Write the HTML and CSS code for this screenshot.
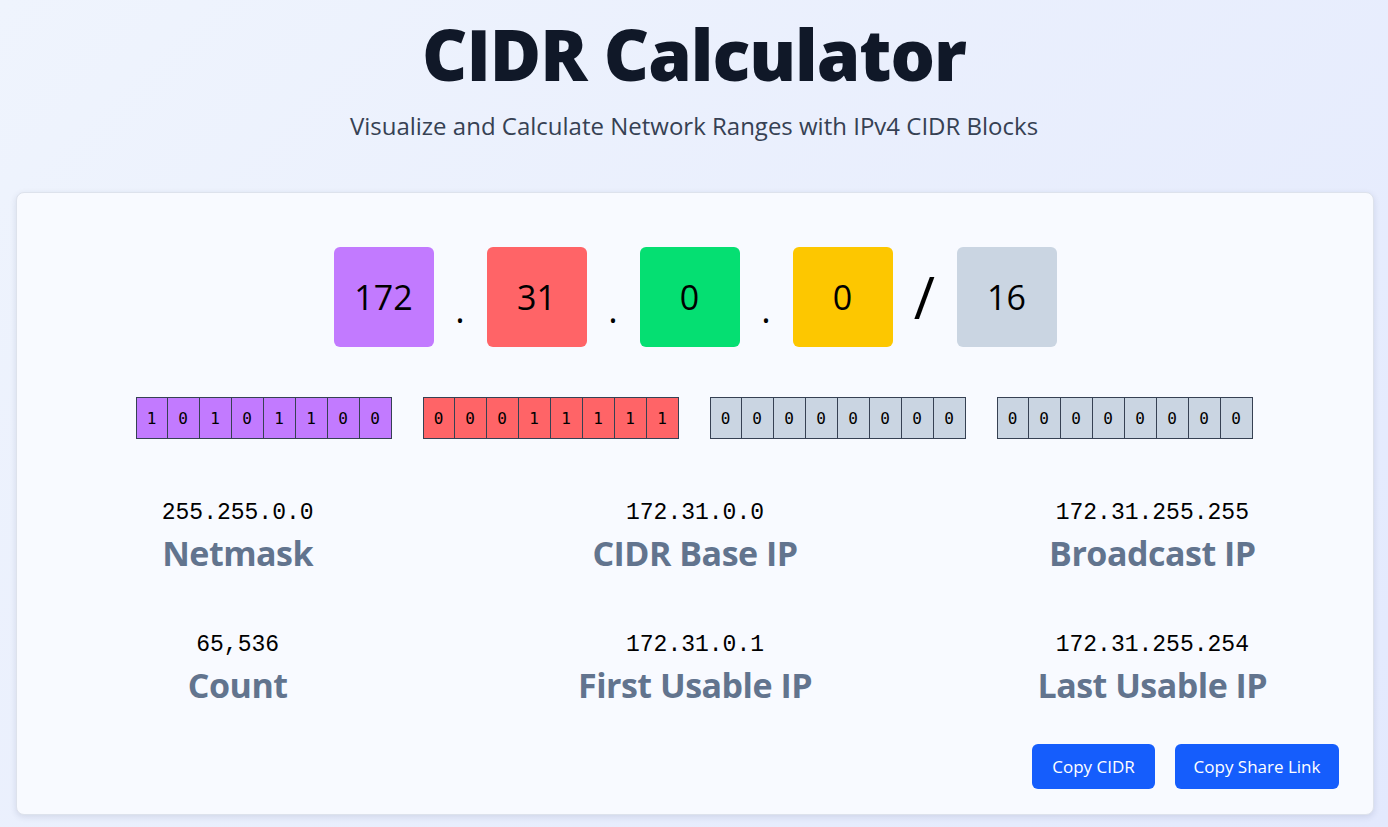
FILE: index.html
```html
<!DOCTYPE html>
<html lang="en">
<head>
<meta charset="utf-8">
<title>CIDR Calculator</title>
<link rel="stylesheet" href="styles.css">
</head>
<body>
<header class="hero">
  <h1 class="title">CIDR Calculator</h1>
  <p class="subtitle">Visualize and Calculate Network Ranges with IPv4 CIDR Blocks</p>
</header>
<main class="card">
  <div class="octets">
    <div class="octet purple">172</div>
    <span class="dot">.</span>
    <div class="octet red">31</div>
    <span class="dot">.</span>
    <div class="octet green">0</div>
    <span class="dot">.</span>
    <div class="octet yellow">0</div>
    <span class="slash">/</span>
    <div class="octet slate">16</div>
  </div>
  <div class="bits">
    <div class="bitgroup purple"><span>1</span><span>0</span><span>1</span><span>0</span><span>1</span><span>1</span><span>0</span><span>0</span></div>
    <div class="bitgroup red"><span>0</span><span>0</span><span>0</span><span>1</span><span>1</span><span>1</span><span>1</span><span>1</span></div>
    <div class="bitgroup slate"><span>0</span><span>0</span><span>0</span><span>0</span><span>0</span><span>0</span><span>0</span><span>0</span></div>
    <div class="bitgroup slate"><span>0</span><span>0</span><span>0</span><span>0</span><span>0</span><span>0</span><span>0</span><span>0</span></div>
  </div>
  <div class="results">
    <div class="result"><div class="value">255.255.0.0</div><div class="label">Netmask</div></div>
    <div class="result"><div class="value">172.31.0.0</div><div class="label">CIDR Base IP</div></div>
    <div class="result"><div class="value">172.31.255.255</div><div class="label">Broadcast IP</div></div>
    <div class="result"><div class="value">65,536</div><div class="label">Count</div></div>
    <div class="result"><div class="value">172.31.0.1</div><div class="label">First Usable IP</div></div>
    <div class="result"><div class="value">172.31.255.254</div><div class="label">Last Usable IP</div></div>
  </div>
  <div class="actions">
    <button class="btn btn-cidr">Copy CIDR</button>
    <button class="btn btn-link">Copy Share Link</button>
  </div>
</main>
</body>
</html>
```

FILE: styles.css
```css
* { box-sizing: border-box; }
html, body { margin: 0; height: 100%; }
body {
  font-family: "Open Sans", "Noto Sans", sans-serif;
  background: linear-gradient(135deg, #eff4fd 0%, #e3e9fd 100%);
  color: #101828;
  min-height: 827px;
}
.hero {
  text-align: center;
  padding-top: 12px;
}
.title {
  margin: 0;
  font-size: 70px;
  font-weight: 800;
  line-height: 84px;
  letter-spacing: -1px;
  color: #101828;
}
.subtitle {
  margin: 14px 0 0;
  font-size: 24px;
  line-height: 32px;
  color: #364153;
}
.card {
  margin: 50px 14px 0 16px;
  background: #f8faff;
  border: 1px solid #dde2ec;
  border-radius: 8px;
  box-shadow: 0 2px 6px rgba(30, 41, 80, 0.12);
  padding: 54px 34px 24px;
  height: 623px;
}
.octets {
  display: flex;
  justify-content: center;
  align-items: center;
  gap: 16px;
}
.octet {
  width: 100px;
  height: 100px;
  border-radius: 6px;
  display: flex;
  align-items: center;
  justify-content: center;
  font-size: 34px;
  color: #000;
}
.dot {
  width: 21px;
  text-align: center;
  font-size: 36px;
  padding-top: 24px;
  color: #000;
}
.slash {
  width: 32px;
  text-align: center;
  font-size: 58px;
  font-weight: 400;
  line-height: 1;
  color: #000;
}
.purple { background: #c27aff; }
.red { background: #ff6467; }
.green { background: #05df72; }
.yellow { background: #fdc700; }
.slate { background: #cad5e2; }
.bits {
  margin-top: 50px;
  display: flex;
  justify-content: center;
  gap: 31px;
  padding-right: 2px;
}
.bitgroup {
  display: flex;
  border: 1px solid #364153;
}
.bitgroup span {
  width: 32px;
  height: 40px;
  display: flex;
  align-items: center;
  justify-content: center;
  font-family: "DejaVu Sans Mono", "Liberation Mono", monospace;
  font-size: 16px;
  color: #000;
  border-left: 1px solid #364153;
}
.bitgroup span:first-child { border-left: none; width: 30px; }
.results {
  margin-top: 59px;
  display: grid;
  grid-template-columns: repeat(3, 1fr);
  column-gap: 84px;
  row-gap: 52px;
}
.result {
  text-align: center;
}
.value {
  font-family: "Liberation Mono", "DejaVu Sans Mono", monospace;
  font-size: 23px;
  line-height: 30px;
  color: #000;
}
.label {
  font-size: 34px;
  font-weight: 700;
  line-height: 50px;
  letter-spacing: -0.5px;
  color: #62748e;
}
.actions {
  margin-top: 34px;
  display: flex;
  justify-content: flex-end;
  gap: 20px;
}
.btn {
  height: 45px;
  padding: 0;
  border: none;
  border-radius: 6px;
  background: #155dfc;
  color: #fff;
  font-family: "Open Sans", "Noto Sans", sans-serif;
  font-size: 17px;
}
.btn-cidr { width: 123px; }
.btn-link { width: 164px; }
```
